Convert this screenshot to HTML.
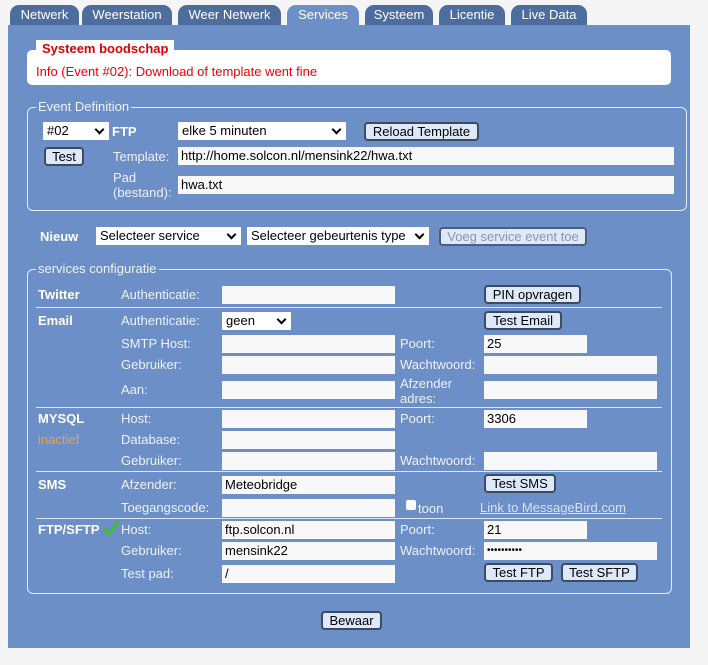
<!DOCTYPE html>
<html><head><meta charset="utf-8"><style>
body{margin:0;width:708px;height:665px;background:#f5f5f5;font-family:"Liberation Sans",Arial,sans-serif;font-size:13px;position:relative;overflow:hidden}
.a{position:absolute}
.tab{position:absolute;top:5px;height:20px;background:#4d6d9f;color:#fff;border-radius:9px 9px 0 0;text-align:center;line-height:20px;font-size:13px}
.panel{position:absolute;left:8px;top:25px;width:682px;height:623px;background:#6b8fc6}
.l{position:absolute;color:#eef2fa;line-height:15px;white-space:nowrap}
.b{font-weight:bold;color:#fff}
.in{position:absolute;background:#f8f8f8;height:18px;line-height:18px;padding-left:3px;box-sizing:border-box;color:#000;font-size:13px;white-space:nowrap;overflow:hidden}
.sel{position:absolute;background:#fff;height:18px;line-height:18px;padding-left:4px;box-sizing:border-box;color:#000;white-space:nowrap}
.sel:after{content:"";position:absolute;right:6px;top:4px;width:5px;height:5px;border-right:2px solid #000;border-bottom:2px solid #000;transform:rotate(45deg)}
.btn{position:absolute;background:#dde9f9;border:2px solid #3d4a60;border-radius:4px;height:19px;box-sizing:border-box;line-height:15px;text-align:center;color:#000;white-space:nowrap}
.fs{position:absolute;border:1px solid #e8eef8;border-radius:6px;box-sizing:border-box}
.lg{position:absolute;background:#6b8fc6;color:#eef2fa;padding:0 2px;line-height:14px}
.hr{position:absolute;left:36px;width:626px;height:1px;background:#dfe7f5}
</style></head><body>
<div class="tab" style="left:10px;width:69px">Netwerk</div>
<div class="tab" style="left:82px;width:90px">Weerstation</div>
<div class="tab" style="left:178px;width:103px">Weer Netwerk</div>
<div class="tab" style="left:287px;width:72px;background:#6b8fc6">Services</div>
<div class="tab" style="left:365px;width:68px">Systeem</div>
<div class="tab" style="left:439px;width:66px">Licentie</div>
<div class="tab" style="left:511px;width:76px">Live Data</div>
<div class="panel"></div>

<div class="a" style="left:27px;top:50px;width:644px;height:35px;background:#fff;border-radius:5px"></div>
<div class="a" style="left:36px;top:40px;width:138px;height:18px;background:#fff;color:#d00;font-weight:bold;line-height:17px;padding-left:6px;box-sizing:border-box">Systeem boodschap</div>
<div class="a" style="left:36px;top:64px;color:#e00">Info (Event #02): Download of template went fine</div>

<div class="fs" style="left:27px;top:107px;width:660px;height:104px"></div>
<div class="lg" style="left:36px;top:100px">Event Definition</div>
<div class="sel" style="left:43px;top:122px;width:66px">#02</div>
<div class="l b" style="left:112px;top:124px">FTP</div>
<div class="sel" style="left:178px;top:122px;width:168px">elke 5 minuten</div>
<div class="btn" style="left:364px;top:122px;width:115px">Reload Template</div>
<div class="btn" style="left:44px;top:147px;width:40px">Test</div>
<div class="l" style="left:113px;top:149px">Template:</div>
<div class="in" style="left:178px;top:147px;width:496px">http://home.solcon.nl/mensink22/hwa.txt</div>
<div class="l" style="left:113px;top:170px">Pad<br>(bestand):</div>
<div class="in" style="left:178px;top:176px;width:496px">hwa.txt</div>

<div class="l b" style="left:40px;top:229px">Nieuw</div>
<div class="sel" style="left:96px;top:227px;width:145px">Selecteer service</div>
<div class="sel" style="left:247px;top:227px;width:182px">Selecteer gebeurtenis type</div>
<div class="btn" style="left:439px;top:227px;width:148px;color:#8a97aa;border-color:#4f5d78">Voeg service event toe</div>

<div class="fs" style="left:27px;top:269px;width:645px;height:325px"></div>
<div class="lg" style="left:36px;top:262px">services configuratie</div>

<div class="l b" style="left:38px;top:287px">Twitter</div>
<div class="l" style="left:121px;top:287px">Authenticatie:</div>
<div class="in" style="left:222px;top:286px;width:173px"></div>
<div class="btn" style="left:484px;top:285px;width:97px">PIN opvragen</div>
<div class="hr" style="top:307px"></div>

<div class="l b" style="left:38px;top:313px">Email</div>
<div class="l" style="left:121px;top:313px">Authenticatie:</div>
<div class="sel" style="left:222px;top:312px;width:69px">geen</div>
<div class="btn" style="left:484px;top:311px;width:78px">Test Email</div>
<div class="l" style="left:121px;top:336px">SMTP Host:</div>
<div class="in" style="left:222px;top:335px;width:173px"></div>
<div class="l" style="left:400px;top:336px">Poort:</div>
<div class="in" style="left:484px;top:335px;width:103px">25</div>
<div class="l" style="left:121px;top:357px">Gebruiker:</div>
<div class="in" style="left:222px;top:356px;width:173px"></div>
<div class="l" style="left:400px;top:357px">Wachtwoord:</div>
<div class="in" style="left:484px;top:356px;width:173px"></div>
<div class="l" style="left:121px;top:382px">Aan:</div>
<div class="in" style="left:222px;top:381px;width:173px"></div>
<div class="l" style="left:400px;top:376px;line-height:15px">Afzender<br>adres:</div>
<div class="in" style="left:484px;top:381px;width:173px"></div>
<div class="hr" style="top:407px"></div>

<div class="l b" style="left:38px;top:411px">MYSQL</div>
<div class="l" style="left:38px;top:432px;color:#f0a040">inactief</div>
<div class="l" style="left:121px;top:411px">Host:</div>
<div class="in" style="left:222px;top:410px;width:173px"></div>
<div class="l" style="left:400px;top:411px">Poort:</div>
<div class="in" style="left:484px;top:410px;width:103px">3306</div>
<div class="l" style="left:121px;top:432px">Database:</div>
<div class="in" style="left:222px;top:431px;width:173px"></div>
<div class="l" style="left:121px;top:453px">Gebruiker:</div>
<div class="in" style="left:222px;top:452px;width:173px"></div>
<div class="l" style="left:400px;top:453px">Wachtwoord:</div>
<div class="in" style="left:484px;top:452px;width:173px"></div>
<div class="hr" style="top:471px"></div>

<div class="l b" style="left:38px;top:477px">SMS</div>
<div class="l" style="left:121px;top:477px">Afzender:</div>
<div class="in" style="left:222px;top:476px;width:173px">Meteobridge</div>
<div class="btn" style="left:484px;top:474px;width:72px">Test SMS</div>
<div class="l" style="left:121px;top:500px">Toegangscode:</div>
<div class="in" style="left:222px;top:499px;width:173px"></div>
<div class="a" style="left:406px;top:500px;width:10px;height:10px;background:#fff;border-radius:2px"></div>
<div class="l" style="left:418px;top:501px">toon</div>
<div class="l" style="left:480px;top:500px;color:#d8e2f2;text-decoration:underline">Link to MessageBird.com</div>
<div class="hr" style="top:518px"></div>

<div class="l b" style="left:38px;top:522px">FTP/SFTP</div>
<svg class="a" style="left:103px;top:520px" width="16" height="16" viewBox="0 0 16 16"><path d="M2 9 L6 14 L15 2" fill="none" stroke="#3cbf2c" stroke-width="3" stroke-linecap="round"/></svg>
<div class="l" style="left:121px;top:522px">Host:</div>
<div class="in" style="left:222px;top:521px;width:173px">ftp.solcon.nl</div>
<div class="l" style="left:400px;top:522px">Poort:</div>
<div class="in" style="left:484px;top:521px;width:103px">21</div>
<div class="l" style="left:121px;top:543px">Gebruiker:</div>
<div class="in" style="left:222px;top:542px;width:173px">mensink22</div>
<div class="l" style="left:400px;top:543px">Wachtwoord:</div>
<div class="in" style="left:484px;top:542px;width:173px;font-size:10px">••••••••••</div>
<div class="l" style="left:121px;top:566px">Test pad:</div>
<div class="in" style="left:222px;top:565px;width:173px">/</div>
<div class="btn" style="left:484px;top:563px;width:69px">Test FTP</div>
<div class="btn" style="left:561px;top:563px;width:77px">Test SFTP</div>

<div class="btn" style="left:321px;top:611px;width:61px">Bewaar</div>
</body></html>
